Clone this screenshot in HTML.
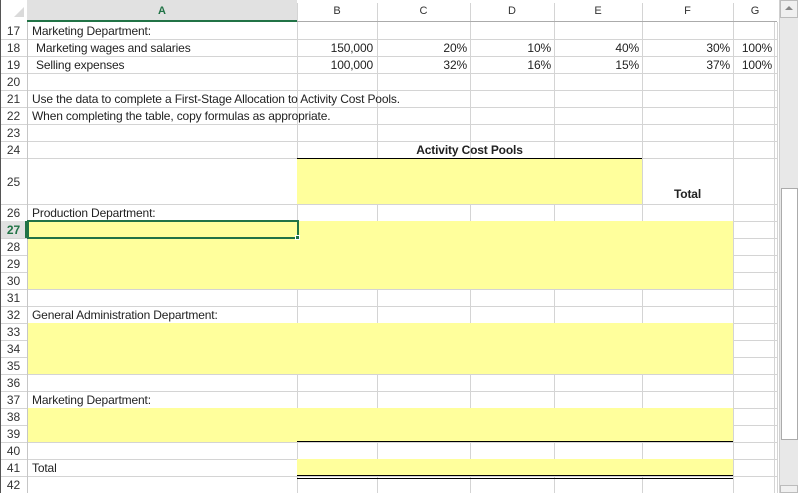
<!DOCTYPE html>
<html><head><style>
body{margin:0;width:798px;height:493px;overflow:hidden;background:#fff;font-family:"Liberation Sans",sans-serif;font-size:12px;color:#222;position:relative}
div{position:absolute;box-sizing:border-box}
.v{width:1px;background:#d4d4d4;top:22px;height:471px}
.h{height:1px;background:#d4d4d4;left:27px;width:750px}
.y{background:#ffff9c}
.t{white-space:nowrap;line-height:17px;padding-top:1px;letter-spacing:-0.15px}
.r{text-align:right}
.rn{left:0;width:27px;text-align:center;line-height:17px;padding-top:1px;color:#333;font-size:12px}
.ch{top:0;height:22px;line-height:22px;text-align:center;color:#333;font-size:11px}
</style></head><body>
<div style="left:0;top:0;width:777px;height:22px;background:#fff;border-bottom:1px solid #ababab"></div>
<div style="left:0;top:0;width:27px;height:22px;background:#fff"></div>
<div style="left:14px;top:7px;width:0;height:0;border-left:10px solid transparent;border-bottom:10px solid #dadada"></div>
<div style="left:27px;top:0;width:270px;height:22px;background:#e1e1e1;border-bottom:2px solid #217346"></div>
<div class="ch" style="left:27px;width:270px;color:#217346;font-weight:bold">A</div>
<div class="ch" style="left:297px;width:80px">B</div>
<div class="ch" style="left:377px;width:93px">C</div>
<div class="ch" style="left:470px;width:84px">D</div>
<div class="ch" style="left:554px;width:88px">E</div>
<div class="ch" style="left:642px;width:91px">F</div>
<div class="ch" style="left:733px;width:44px">G</div>
<div style="left:297px;top:3px;width:1px;height:18px;background:#d4d4d4"></div>
<div style="left:377px;top:3px;width:1px;height:18px;background:#d4d4d4"></div>
<div style="left:470px;top:3px;width:1px;height:18px;background:#d4d4d4"></div>
<div style="left:554px;top:3px;width:1px;height:18px;background:#d4d4d4"></div>
<div style="left:642px;top:3px;width:1px;height:18px;background:#d4d4d4"></div>
<div style="left:733px;top:3px;width:1px;height:18px;background:#d4d4d4"></div>
<div style="left:0;top:23px;width:777px;height:136px;background:repeating-linear-gradient(to bottom,transparent 0 16px,#d4d4d4 16px 17px)"></div>
<div style="left:0;top:205px;width:777px;height:288px;background:repeating-linear-gradient(to bottom,transparent 0 16px,#d4d4d4 16px 17px)"></div>
<div class="h" style="left:0;top:204px;width:777px"></div>
<div class="v" style="left:27px;background:#c6c6c6"></div>
<div class="v" style="left:297px"></div>
<div class="v" style="left:377px"></div>
<div class="v" style="left:470px"></div>
<div class="v" style="left:554px"></div>
<div class="v" style="left:642px"></div>
<div class="v" style="left:733px"></div>
<div class="v" style="left:774px"></div>
<div class="v" style="left:777px"></div>
<div class="y" style="left:297px;top:158px;width:345px;height:46px;border-top:1px solid #000"></div>
<div class="y" style="left:28px;top:221px;width:705px;height:68px"></div>
<div class="y" style="left:28px;top:323px;width:705px;height:51px"></div>
<div class="y" style="left:28px;top:408px;width:705px;height:34px"></div>
<div style="left:297px;top:441px;width:436px;height:1px;background:#000"></div>
<div class="y" style="left:297px;top:459px;width:436px;height:17px"></div>
<div style="left:297px;top:475px;width:436px;height:4px;border-top:1px solid #000;border-bottom:1px solid #000"></div>
<div style="left:27px;top:220px;width:272px;height:19px;border:2px solid #217346"></div>
<div style="left:295px;top:235px;width:5px;height:5px;background:#217346;border:1px solid #fff"></div>
<div style="left:0;top:221px;width:27px;height:17px;background:#e1e1e1;border-right:2px solid #217346"></div>
<div class="rn" style="top:22px">17</div>
<div class="rn" style="top:39px">18</div>
<div class="rn" style="top:56px">19</div>
<div class="rn" style="top:73px">20</div>
<div class="rn" style="top:90px">21</div>
<div class="rn" style="top:107px">22</div>
<div class="rn" style="top:124px">23</div>
<div class="rn" style="top:141px">24</div>
<div class="rn" style="top:158px;line-height:46px">25</div>
<div class="rn" style="top:204px">26</div>
<div class="rn" style="top:221px;color:#217346;font-weight:bold">27</div>
<div class="rn" style="top:238px">28</div>
<div class="rn" style="top:255px">29</div>
<div class="rn" style="top:272px">30</div>
<div class="rn" style="top:289px">31</div>
<div class="rn" style="top:306px">32</div>
<div class="rn" style="top:323px">33</div>
<div class="rn" style="top:340px">34</div>
<div class="rn" style="top:357px">35</div>
<div class="rn" style="top:374px">36</div>
<div class="rn" style="top:391px">37</div>
<div class="rn" style="top:408px">38</div>
<div class="rn" style="top:425px">39</div>
<div class="rn" style="top:442px">40</div>
<div class="rn" style="top:459px">41</div>
<div class="rn" style="top:476px">42</div>
<div class="t" style="left:32px;top:22px">Marketing Department:</div>
<div class="t" style="left:36px;top:39px">Marketing wages and salaries</div>
<div class="t" style="left:36px;top:56px">Selling expenses</div>
<div class="t r" style="left:297px;top:39px;width:76px">150,000</div>
<div class="t r" style="left:297px;top:56px;width:76px">100,000</div>
<div class="t r" style="left:377px;top:39px;width:90px">20%</div>
<div class="t r" style="left:377px;top:56px;width:90px">32%</div>
<div class="t r" style="left:470px;top:39px;width:81px">10%</div>
<div class="t r" style="left:470px;top:56px;width:81px">16%</div>
<div class="t r" style="left:554px;top:39px;width:85px">40%</div>
<div class="t r" style="left:554px;top:56px;width:85px">15%</div>
<div class="t r" style="left:642px;top:39px;width:88px">30%</div>
<div class="t r" style="left:642px;top:56px;width:88px">37%</div>
<div class="t r" style="left:733px;top:39px;width:39px">100%</div>
<div class="t r" style="left:733px;top:56px;width:39px">100%</div>
<div class="t" style="left:32px;top:90px">Use the data to complete a First-Stage Allocation to Activity Cost Pools.</div>
<div class="t" style="left:32px;top:107px">When completing the table, copy formulas as appropriate.</div>
<div class="t" style="left:297px;top:141px;width:345px;text-align:center;font-weight:bold">Activity Cost Pools</div>
<div class="t" style="left:642px;top:185px;width:91px;text-align:center;font-weight:bold">Total</div>
<div class="t" style="left:32px;top:204px">Production Department:</div>
<div class="t" style="left:32px;top:306px">General Administration Department:</div>
<div class="t" style="left:32px;top:391px">Marketing Department:</div>
<div class="t" style="left:32px;top:459px">Total</div>
<div style="left:779px;top:0;width:19px;height:493px;background:#e8e8e8;border-left:1px solid #cfcfcf"></div>
<div style="left:780px;top:0;width:18px;height:18px;background:#f0f0f0;border:1px solid #bcbcbc"></div>
<div style="left:785px;top:6px;width:0;height:0;border-left:4px solid transparent;border-right:4px solid transparent;border-bottom:4px solid #888"></div>
<div style="left:781px;top:188px;width:17px;height:252px;background:#fff;border:1px solid #ababab"></div>
<div style="left:780px;top:485px;width:18px;height:8px;background:#f0f0f0;border:1px solid #bcbcbc"></div>
<div style="left:0;top:0;width:1px;height:493px;background:#555"></div>
</body></html>
